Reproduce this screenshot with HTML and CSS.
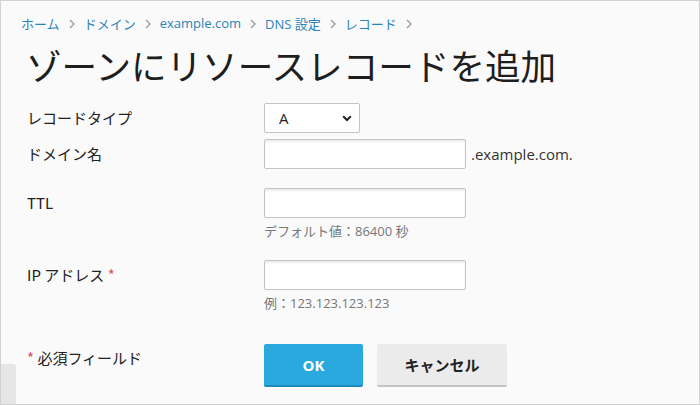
FILE: index.html
```html
<!DOCTYPE html>
<html lang="ja">
<head>
<meta charset="utf-8">
<title>ゾーンにリソースレコードを追加</title>
<link rel="stylesheet" href="styles.css">
</head>
<body>
<div class="page">
  <nav class="crumbs">
    <a class="crumb">ホーム</a>
    <svg class="sep" viewBox="0 0 6 10" width="6" height="10"><path d="M1 1l4 4-4 4" fill="none" stroke="#9a9a9a" stroke-width="1.3"/></svg>
    <a class="crumb">ドメイン</a>
    <svg class="sep" viewBox="0 0 6 10" width="6" height="10"><path d="M1 1l4 4-4 4" fill="none" stroke="#9a9a9a" stroke-width="1.3"/></svg>
    <a class="crumb">example.com</a>
    <svg class="sep" viewBox="0 0 6 10" width="6" height="10"><path d="M1 1l4 4-4 4" fill="none" stroke="#9a9a9a" stroke-width="1.3"/></svg>
    <a class="crumb">DNS 設定</a>
    <svg class="sep" viewBox="0 0 6 10" width="6" height="10"><path d="M1 1l4 4-4 4" fill="none" stroke="#9a9a9a" stroke-width="1.3"/></svg>
    <a class="crumb">レコード</a>
    <svg class="sep" viewBox="0 0 6 10" width="6" height="10"><path d="M1 1l4 4-4 4" fill="none" stroke="#9a9a9a" stroke-width="1.3"/></svg>
  </nav>
  <h1 class="title">ゾーンにリソースレコードを追加</h1>
  <form class="form">
    <div class="row row-type">
      <label class="label">レコードタイプ</label>
      <div class="field">
        <div class="select-wrap">
          <select class="select"><option>A</option></select>
          <svg class="caret" viewBox="0 0 10 7" width="10" height="7"><path d="M1.2 1.3L5 5l3.8-3.7" fill="none" stroke="#222" stroke-width="2"/></svg>
        </div>
      </div>
    </div>
    <div class="row row-domain">
      <label class="label">ドメイン名</label>
      <div class="field inline">
        <input class="input" type="text">
        <span class="suffix">.example.com.</span>
      </div>
    </div>
    <div class="row row-ttl">
      <label class="label">TTL</label>
      <div class="field">
        <input class="input" type="text">
        <div class="hint">デフォルト値：86400 秒</div>
      </div>
    </div>
    <div class="row row-ip">
      <label class="label">IP アドレス <span class="req">*</span></label>
      <div class="field">
        <input class="input" type="text">
        <div class="hint">例：123.123.123.123</div>
      </div>
    </div>
    <div class="row row-actions">
      <div class="label note"><span class="req">*</span> 必須フィールド</div>
      <div class="field buttons">
        <button type="button" class="btn btn-ok">OK</button>
        <button type="button" class="btn btn-cancel">キャンセル</button>
      </div>
    </div>
  </form>
  <div class="side-tab"></div>
</div>
</body>
</html>
```
FILE: styles.css
```css
* { box-sizing: border-box; }
html, body { margin: 0; padding: 0; }
body {
  width: 700px;
  height: 405px;
  overflow: hidden;
  font-family: "Open Sans", "Noto Sans CJK JP", sans-serif;
  color: #222;
}
.page {
  position: relative;
  width: 700px;
  height: 405px;
  background: #fafafa;
  border: 1px solid #d2d2d2;
  padding: 12px 0 0 20px;
}
.crumbs {
  display: flex;
  align-items: center;
  height: 20px;
  font-size: 13px;
}
.crumb {
  color: #2a83b8;
  text-decoration: none;
  white-space: nowrap;
}
.sep {
  margin: 1px 9px 0 9px;
  flex: none;
}
.title {
  margin: 10px 0 0 5px;
  font-family: "Noto Sans CJK JP", sans-serif;
  font-weight: 400;
  font-size: 35.6px;
  line-height: 44px;
  color: #1e1e1e;
  letter-spacing: 0;
}
.form {
  margin-top: 16px;
  padding-left: 6px;
}
.row {
  display: grid;
  grid-template-columns: 237px 1fr;
  align-items: start;
}
.label {
  font-family: "Noto Sans CJK JP", "Open Sans", sans-serif;
  font-size: 15px;
  line-height: 30px;
  color: #222;
}
.req { color: #e0506a; }
.row-domain { margin-top: 6px; }
.row-ttl { margin-top: 19px; }
.row-ip { margin-top: 20px; }
.row-actions { margin-top: 32px; }
.note { line-height: 28px; }
.field.inline {
  display: flex;
  align-items: center;
}
.select-wrap {
  position: relative;
  width: 96px;
  height: 30px;
}
.select {
  appearance: none;
  -webkit-appearance: none;
  width: 96px;
  height: 30px;
  border: 1px solid #c4c4c4;
  border-radius: 2px;
  background: #fff;
  font-family: "Open Sans", sans-serif;
  font-size: 15px;
  color: #222;
  padding: 0 0 0 14px;
  margin: 0;
}
.caret {
  position: absolute;
  right: 8px;
  top: 12px;
  pointer-events: none;
}
.input {
  display: block;
  width: 202px;
  height: 30px;
  border: 1px solid #c4c4c4;
  border-radius: 2px;
  background: #fff;
  box-shadow: inset 0 2px 2px rgba(0,0,0,0.07);
  margin: 0;
  padding: 0 6px;
  font-size: 14px;
}
.suffix {
  margin-left: 5px;
  font-size: 15px;
  color: #333;
}
.hint {
  margin-top: 4px;
  font-family: "Open Sans", "Noto Sans CJK JP", sans-serif;
  font-size: 13px;
  line-height: 18px;
  color: #777;
}
.buttons {
  display: flex;
  gap: 14px;
}
.btn {
  height: 43px;
  border: 0;
  border-radius: 2px;
  font-family: "Open Sans", "Noto Sans CJK JP", sans-serif;
  font-weight: 700;
  font-size: 15px;
  margin: 0;
  padding: 0;
}
.btn-ok {
  width: 99px;
  background: #29a9dd;
  color: #fff;
  border-bottom: 2px solid #1c8bbd;
}
.btn-cancel {
  width: 130px;
  background: #ebebeb;
  color: #222;
  border-bottom: 2px solid #c4c4c4;
}
.side-tab {
  position: absolute;
  left: 0;
  bottom: 0;
  width: 15px;
  height: 40px;
  background: #e6e6e6;
  border-top-right-radius: 3px;
}
```
